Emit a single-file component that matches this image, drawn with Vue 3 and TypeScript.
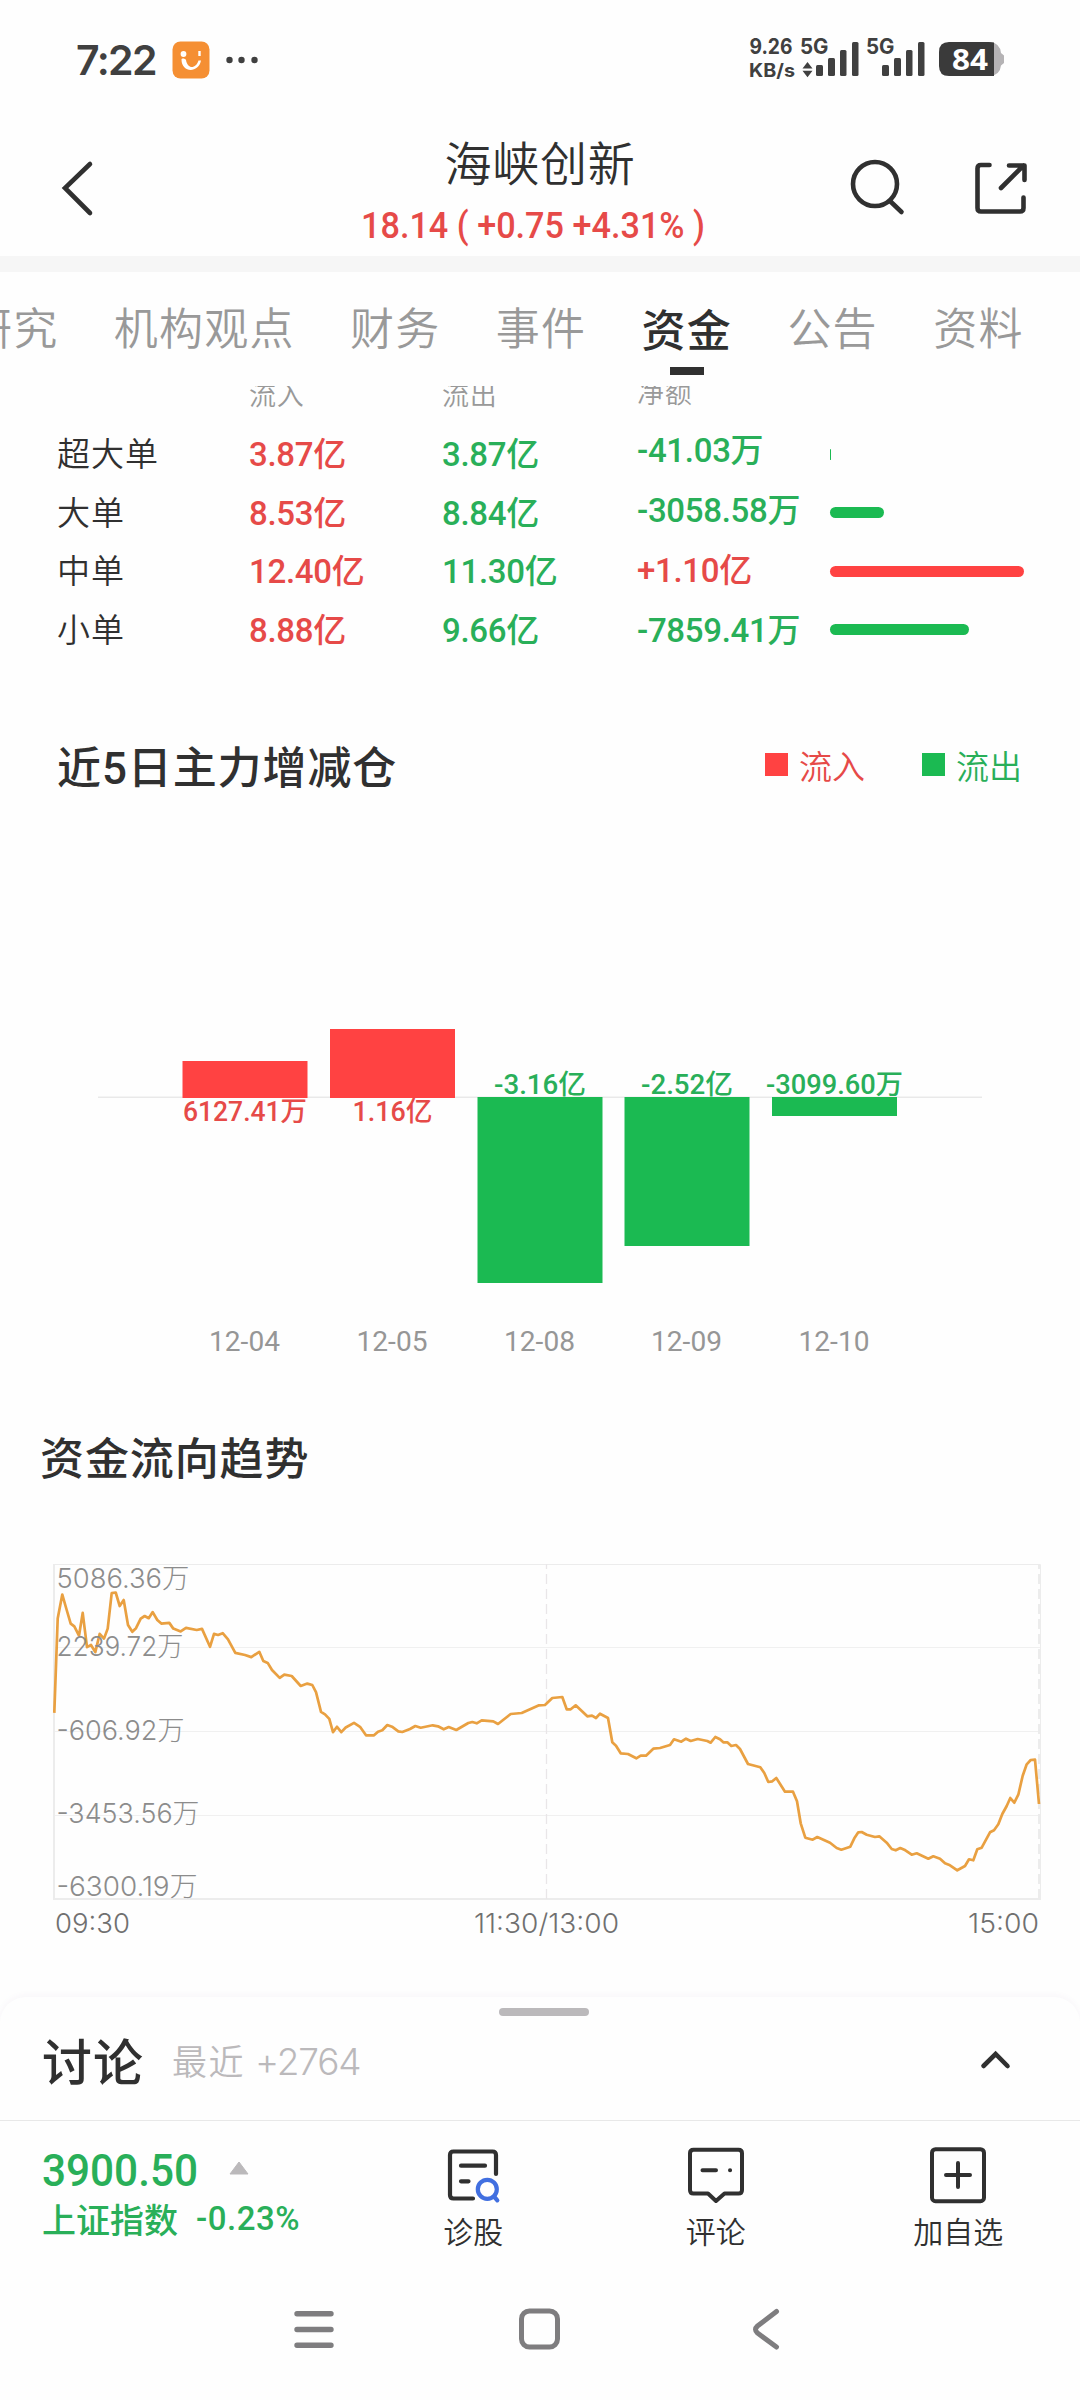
<script setup lang="ts">
type Tone = 'up' | 'down'

interface Tab {
  label: string
  active?: boolean
}

interface DayBar {
  date: string
  label: string
  tone: Tone
  center: number
  size: number
  labelWidth: number
}

interface AxisLabel {
  text: string
  baseline: number
  width: number
}

const tabs: Tab[] = [
  { label: '研究' },
  { label: '机构观点' },
  { label: '财务' },
  { label: '事件' },
  { label: '资金', active: true },
  { label: '公告' },
  { label: '资料' },
]

const sizes: string[] = ['超大单', '大单', '中单', '小单']
const inflow: string[] = ['3.87亿', '8.53亿', '12.40亿', '8.88亿']
const outflow: string[] = ['3.87亿', '8.84亿', '11.30亿', '9.66亿']
const net: { text: string; tone: Tone; bar: number }[] = [
  { text: '-41.03万', tone: 'down', bar: 1 },
  { text: '-3058.58万', tone: 'down', bar: 54 },
  { text: '+1.10亿', tone: 'up', bar: 194 },
  { text: '-7859.41万', tone: 'down', bar: 139 },
]

const zero = 97
const days: DayBar[] = [
  { date: '12-04', label: '6127.41万', tone: 'up', center: 245, size: 36, labelWidth: 124 },
  { date: '12-05', label: '1.16亿', tone: 'up', center: 392.5, size: 68, labelWidth: 80 },
  { date: '12-08', label: '-3.16亿', tone: 'down', center: 540, size: 186, labelWidth: 92 },
  { date: '12-09', label: '-2.52亿', tone: 'down', center: 687, size: 149, labelWidth: 92 },
  { date: '12-10', label: '-3099.60万', tone: 'down', center: 834.5, size: 19, labelWidth: 137 },
]

const axis: AxisLabel[] = [
  { text: '5086.36万', baseline: 1587.5, width: 133 },
  { text: '2239.72万', baseline: 1655.5, width: 127 },
  { text: '-606.92万', baseline: 1739.5, width: 128 },
  { text: '-3453.56万', baseline: 1823, width: 143 },
  { text: '-6300.19万', baseline: 1896, width: 141 },
]

const trend =
  '54.3,1712.9 57.7,1618.6 62.3,1594.6 66.7,1610 70.7,1623.6 74.3,1626.4 79,1635.7 82.7,1612.9 87,1647.1 91,1645 95.3,1652.1 99.7,1633.9 104,1638.6 107.7,1628.6 111.7,1593.2 115.7,1592.5 119.7,1606 123.7,1600 128,1625 132.3,1631.8 136,1628.2 140.7,1618.6 144.7,1616 148.7,1618.2 152.7,1612.1 157.3,1620 161.3,1623.6 169.3,1622.9 173.3,1628.6 180.7,1631.4 186,1627.9 196.7,1630 202,1628.9 210,1646.8 214,1633.9 218,1635 222.7,1633.2 228,1639.3 235.3,1652.9 245,1655 251.3,1657.1 259.3,1651.8 263.3,1661 267.7,1662.9 272,1670 279.7,1677.9 284.3,1674.6 291.7,1676 300.7,1686 307.3,1683.6 312.3,1685 316,1692.1 321,1711.8 325,1714.3 329.3,1718.9 333,1732.1 337,1726.8 341.3,1732.1 345.7,1727.5 354,1722.9 360,1726.8 ' +
  '366,1735.3 374,1735.3 378,1731.7 382.3,1730.3 387.3,1725 392,1726.7 398.3,1731.3 402.3,1732 410,1729 415.3,1726 420.7,1727.7 432.7,1725.3 438,1726.3 443.7,1729.3 448.7,1727 456.3,1730 468.3,1723 472.3,1722 476.7,1723.3 481.7,1720.3 493.3,1721.3 498,1724 510.7,1714 521.7,1713 539,1705.3 545,1705 552.3,1698 562.3,1697 566.7,1709.3 570.7,1709.3 575.7,1705.3 587.3,1716.3 592,1715.7 596,1718 600,1713.7 608,1718 612.3,1742.3 616,1745.7 620.7,1753.3 628,1754 636.3,1758.3 640.7,1755.7 646,1755.7 653.3,1748.7 660,1748 670,1745 674,1739.3 681.3,1741.7 686,1738.7 690.7,1741 697.7,1739 707.3,1741 710.7,1742.7 715.3,1737 720,1739.3 ' +
  '723.3,1742.3 727.3,1742.3 731.3,1746 736,1745 740,1749 748,1764 760.3,1767.3 764.3,1773 768.3,1782 772.3,1781.3 776.3,1778 785,1791.7 793,1791.7 797,1801.3 800.7,1823.3 805.3,1837.7 812.7,1839.7 817.3,1837 830,1842.7 836.7,1848 841.3,1849.7 850.3,1846.7 854.3,1838.3 858.3,1832.3 861.7,1832 866.7,1834.7 875,1837 879.3,1836.3 886.7,1842.7 891.7,1849 895.7,1850.3 900.3,1848 904.3,1849.7 911.7,1854.7 916.7,1853.3 928.3,1858.7 933.3,1856.3 940,1858.7 945,1863.3 950,1865.3 957.3,1870.3 965,1866 969,1859.3 973.3,1860.3 977.3,1849.3 981.7,1847.7 990,1832.3 994,1830.3 998.3,1824.3 1002.3,1814 1006.7,1806 1010.3,1798 1014.3,1802.7 1018.3,1794.7 1022.7,1775.7 1026.7,1764.3 1030.7,1760 1035,1759.7 1039,1804'
</script>

<template>
  <div class="screen">
    <div class="status">
      <span class="clock">7:22</span>
      <svg class="app-badge" width="38" height="38" viewBox="0 0 38 38">
        <rect x="0.5" y="0.5" width="37" height="37" rx="8" fill="#f58f33" />
        <circle cx="11.500" cy="13" r="2.900" fill="#fff" />
        <path d="M27.500 10v5" stroke="#fff" stroke-width="2.400" />
        <path d="M9.500 18.500c0 13.500 17 14 19.500 1h-2.500c-2.500 8.500-11 9-12.500-.5c-1-2-4.500-2-4.500-.5z" fill="#fff" />
      </svg>
      <svg class="more" width="36" height="8" viewBox="0 0 36 8" fill="#404040">
        <circle cx="4.500" cy="4" r="3.200" /><circle cx="16.500" cy="4" r="3.200" /><circle cx="29.500" cy="4" r="3.200" />
      </svg>
      <svg class="signals" width="260" height="90" viewBox="748 15 260 90" fill="#404040">
        <g class="tiny">
          <text x="749.500" y="53.500" font-size="21.500" textLength="43" lengthAdjust="spacingAndGlyphs">9.26</text>
          <text x="749" y="76.500" font-size="18.500" textLength="46" lengthAdjust="spacingAndGlyphs">KB/s</text>
          <text x="800" y="53.500" font-size="21.500" textLength="28.500" lengthAdjust="spacingAndGlyphs">5G</text>
          <text x="866" y="53.500" font-size="21.500" textLength="28.500" lengthAdjust="spacingAndGlyphs">5G</text>
        </g>
        <path d="M802.500 68.500l5-6.500l5 6.500zM802.500 70.700l5 6.500l5-6.500z" />
        <g v-for="dx in [0, 66]" :key="dx" :transform="`translate(${dx} 0)`">
          <rect x="816" y="65" width="7" height="11" rx="1.500" />
          <rect x="828" y="58" width="7" height="18" rx="1.500" />
          <rect x="840" y="50" width="6.500" height="26" rx="1.500" />
          <rect x="852" y="42" width="6.500" height="34" rx="1.500" />
        </g>
        <path d="M990 42q10 1 11 11l3 2.500v7.500l-3 2.500q-1 9.500-11 10.500z" fill="#b5b3b5" />
        <path d="M994 42.500v33.500h-45q-10 0-10-10v-14q0-10 10-10h40q3 0 5 .5z" fill="#3a3a3a" />
        <text x="952" y="69.500" font-size="29" font-weight="700" fill="#fff" class="charge" textLength="36" lengthAdjust="spacingAndGlyphs">84</text>
      </svg>
    </div>

    <header class="head">
      <svg class="back" width="34" height="60" viewBox="61 158 34 60" fill="none" stroke="#303030" stroke-width="4.600" stroke-linecap="round">
        <path d="M90 164L65 188l25 25" />
      </svg>
      <div class="stock">
        <h1>海峡创新</h1>
        <svg class="quote" width="350" height="40" viewBox="0 0 350 40">
          <text x="2" y="32" textLength="344" lengthAdjust="spacingAndGlyphs">18.14 ( +0.75 +4.31% )</text>
        </svg>
      </div>
      <div class="actions">
        <svg width="180" height="60" viewBox="848 158 180 60" fill="none" stroke="#303030" stroke-width="4.600" stroke-linecap="round" stroke-linejoin="round">
          <circle cx="875" cy="184" r="22" />
          <path d="M890 201l11.500 11" />
          <path d="M989.500 165H981q-3.500 0-3.500 3.500V208q0 3.500 3.500 3.500h39q3.500 0 3.500-3.500v-10.500" />
          <path d="M1001 188l22.500-22.500M1009 165.500h15.500V180" />
        </svg>
      </div>
    </header>
    <div class="band"></div>

    <nav class="tabs">
      <span v-for="tab in tabs" :key="tab.label" :class="['tab', { active: tab.active }]">{{ tab.label }}</span>
    </nav>

    <main class="content">
      <section class="orders">
        <div class="col names">
          <div class="th"></div>
          <div v-for="name in sizes" :key="name" class="td name">{{ name }}</div>
        </div>
        <div class="col in">
          <div class="th">流入</div>
          <div v-for="(v, i) in inflow" :key="i" class="td num up">{{ v }}</div>
        </div>
        <div class="col out">
          <div class="th">流出</div>
          <div v-for="(v, i) in outflow" :key="i" class="td num down">{{ v }}</div>
        </div>
        <div class="col net">
          <div class="th">净额</div>
          <div v-for="row in net" :key="row.text" :class="['td', 'num', row.tone]">{{ row.text }}</div>
        </div>
        <div class="col meters">
          <div class="th"></div>
          <div v-for="row in net" :key="row.text" class="td">
            <i :class="['meter', row.tone]" :style="{ width: row.bar + 'px' }"></i>
          </div>
        </div>
      </section>

      <div class="section-head">
        <h2>近5日主力增减仓</h2>
        <span class="legend up"><i></i>流入</span>
        <span class="legend down"><i></i>流出</span>
      </div>
      <svg class="days" width="1080" height="370" viewBox="0 0 1080 370">
        <path d="M98 97.300H982" stroke="#e9e9e9" stroke-width="1.500" />
        <g v-for="d in days" :key="d.date">
          <rect
            :x="d.center - 62.500"
            :y="d.tone === 'up' ? zero - d.size : zero"
            width="125"
            :height="d.size + (d.tone === 'up' ? 1 : 0)"
            :class="d.tone"
          />
          <text
            class="day-value"
            :class="d.tone"
            :x="d.center - d.labelWidth / 2"
            :y="d.tone === 'up' ? 120.500 : 94"
            :textLength="d.labelWidth"
            lengthAdjust="spacingAndGlyphs"
          >{{ d.label }}</text>
          <text class="date" :x="d.center - 36" y="351" textLength="71" lengthAdjust="spacingAndGlyphs">{{ d.date }}</text>
        </g>
      </svg>

      <h2 class="trend-title">资金流向趋势</h2>
      <svg class="trend" width="1080" height="400" viewBox="0 1550 1080 400">
        <g fill="none" stroke="#ececec">
          <path d="M54 1647.500H1040M54 1731.500H1040M54 1815.500H1040" stroke="#f0f0f0" />
          <path d="M53 1564.500H1040.500V1900" />
          <path d="M54 1564V1900" stroke-width="2" />
          <path d="M53 1899H1041" stroke-width="2" />
          <path d="M546.500 1899V1564" stroke-dasharray="10 5" stroke="#e9e6e8" stroke-width="1.300" />
          <path d="M1039 1899V1564" stroke-dasharray="10 5" stroke-width="2" />
        </g>
        <polyline :points="trend" fill="none" stroke="#e9a041" stroke-width="2.700" stroke-linejoin="round" />
        <text
          v-for="a in axis"
          :key="a.text"
          class="axis"
          x="56.500"
          :y="a.baseline"
          :textLength="a.width"
          lengthAdjust="spacingAndGlyphs"
        >{{ a.text }}</text>
        <g class="times">
          <text x="55" y="1933" textLength="75" lengthAdjust="spacingAndGlyphs">09:30</text>
          <text x="474" y="1933" textLength="145" lengthAdjust="spacingAndGlyphs">11:30/13:00</text>
          <text x="968" y="1933" textLength="71" lengthAdjust="spacingAndGlyphs">15:00</text>
        </g>
      </svg>
    </main>

    <section class="sheet">
      <div class="grip"></div>
      <div class="talk">
        <h3>讨论</h3>
        <span class="recent">最近 <b>+2764</b></span>
        <svg class="expand" width="32" height="20" viewBox="980 2050 32 20" fill="none" stroke="#303030" stroke-width="4.600" stroke-linecap="round">
          <path d="M983.500 2066L995.600 2054L1007.500 2066" />
        </svg>
      </div>
      <footer class="bar">
        <div class="index down">
          <div class="index-top">
            <svg width="156" height="40" viewBox="0 0 156 40">
              <text x="0" y="35.500" font-size="43.500" textLength="156" lengthAdjust="spacingAndGlyphs">3900.50</text>
            </svg>
            <svg class="tri" width="20" height="14" viewBox="0 0 20 14"><path d="M10 1L19 13H1z" fill="#bbb9bb" stroke="#bbb9bb" stroke-linejoin="round" /></svg>
          </div>
          <div class="index-bottom"><span>上证指数</span><b>-0.23%</b></div>
        </div>
        <div class="action">
          <svg width="60" height="60" viewBox="443 2145 60 60" fill="none" stroke="#303030" stroke-width="4.200" stroke-linecap="round" stroke-linejoin="round">
            <path d="M496 2174V2155q0-3.500-3.500-3.500H453.500q-3.500 0-3.500 3.500V2195q0 3.500 3.500 3.500H473" />
            <path d="M461 2165.700h24M461 2181.300h7.500" />
            <g stroke="#416fe0"><circle cx="487.300" cy="2189.300" r="9.500" /><path d="M494 2196.500l3.300 3.800" /></g>
          </svg>
          <span>诊股</span>
        </div>
        <div class="action">
          <svg width="60" height="60" viewBox="686 2145 60 60" fill="none" stroke="#303030" stroke-width="4" stroke-linecap="round" stroke-linejoin="round">
            <path d="M693.500 2149.800H738.500q3.500 0 3.500 3.500V2190q0 3.500-3.500 3.500H724.500L716 2201L708 2193.500H693.500q-3.500 0-3.500-3.500V2153.300q0-3.500 3.500-3.500z" />
            <path d="M702.500 2170.300h13.500M730 2170.300h.1" />
          </svg>
          <span>评论</span>
        </div>
        <div class="action">
          <svg width="60" height="60" viewBox="928 2145 60 60" fill="none" stroke="#303030" stroke-width="4" stroke-linecap="round">
            <rect x="932" y="2149.200" width="52" height="52" rx="3.500" />
            <path d="M946 2175h24M958 2163v24" />
          </svg>
          <span>加自选</span>
        </div>
      </footer>
      <svg class="system" width="1080" height="60" viewBox="0 2300 1080 60" fill="none" stroke="#7e7d7f" stroke-width="5.400" stroke-linecap="round" stroke-linejoin="round">
        <path d="M297 2313.700h34M297 2329.500h34M297 2345.300h34" />
        <rect x="521.500" y="2311" width="36" height="36" rx="8" stroke-width="5" />
        <path d="M776.500 2311.500L757.500 2326q-4 3.500 0 7L776.500 2347" stroke-width="5" />
      </svg>
    </section>
  </div>
</template>

<style>
body {
  background: #fefefe;
}
</style>

<style scoped>
.screen {
  width: 1080px;
  height: 2400px;
  overflow: hidden;
  display: flex;
  flex-direction: column;
  background: #fefefe;
  color: #303030;
  font-family: Roboto, 'Noto Sans CJK SC', sans-serif;
}
svg {
  overflow: visible;
  flex: none;
}
h1,
h2,
h3 {
  margin: 0;
  font-weight: 400;
}
.up {
  color: #e64a48;
}
.down {
  color: #29af59;
}
.status {
  display: flex;
  align-items: center;
  height: 120px;
  padding: 0 72px 0 76px;
}
.clock {
  width: 96px;
  font: 600 41px/50px Inter, sans-serif;
  letter-spacing: -1.6px;
  color: #404040;
}
.more {
  margin-left: 15px;
}
.signals {
  margin-left: auto;
}
.tiny {
  font-family: Inter, sans-serif;
  font-weight: 700;
}
.charge {
  font-family: 'Noto Sans', sans-serif;
}
.head {
  display: grid;
  grid-template-columns: 1fr 350px 1fr;
  height: 136px;
}
.back {
  margin: 38px 0 0 61px;
}
.stock {
  display: flex;
  flex-direction: column;
  align-items: center;
  padding-top: 14px;
}
.stock h1 {
  font-size: 47px;
  line-height: 61px;
  font-weight: 350;
  letter-spacing: 0.8px;
}
.quote {
  margin: 11px 12px 0 0;
  font-size: 36px;
  font-weight: 500;
  fill: #e64a48;
}
.actions {
  display: flex;
  justify-content: flex-end;
  padding: 38px 52px 0 0;
}
.band {
  height: 16px;
  flex: none;
  background: #f6f6f6;
}
.tabs {
  display: flex;
  gap: 55.4px;
  height: 114px;
  margin-left: -32px;
}
.tab {
  flex: none;
  display: flex;
  flex-direction: column;
  align-items: center;
  padding-top: 28px;
  font-size: 44px;
  line-height: 60px;
  letter-spacing: 1.2px;
  font-weight: 350;
  color: #999;
}
.tab.active {
  padding-top: 30px;
  color: #303030;
  font-weight: 500;
}
.tab.active::after {
  content: '';
  width: 34px;
  height: 8px;
  margin-top: 5px;
  background: #303030;
}
.content {
  height: 1604px;
  flex: none;
  overflow: hidden;
}
.orders {
  display: grid;
  grid-template-columns: 192px 193px 195px 193px 250px;
  padding-left: 57px;
  height: 348px;
}
.col {
  margin-top: -5px;
}
.th {
  height: 42px;
  font-size: 27px;
  line-height: 30px;
  letter-spacing: 0.8px;
  font-weight: 350;
  color: #999;
}
.td {
  display: flex;
  align-items: center;
  height: 58.5px;
}
.name {
  font-size: 33px;
  letter-spacing: 1px;
  font-weight: 350;
}
.num {
  font-size: 33px;
  font-weight: 500;
  letter-spacing: -0.3px;
  white-space: nowrap;
}
.net {
  margin-top: -7px;
}
.net .th {
  height: 39px;
}
.net .td {
  height: 60px;
}
.meters .th {
  height: 44.500px;
}
.meters .td {
  height: 58.300px;
}
.meter {
  height: 11px;
  border-radius: 5.500px;
}
.meter.up,
.legend.up i {
  background: #ff4242;
}
.meter.down,
.legend.down i {
  background: #1bba52;
}
.section-head {
  display: flex;
  align-items: center;
  height: 61px;
  padding: 0 58px 0 57px;
}
h2 {
  font-size: 44px;
  letter-spacing: 0.9px;
  font-weight: 500;
}
.section-head h2 {
  margin-right: auto;
}
.legend {
  display: flex;
  align-items: center;
  gap: 11px;
  margin-left: 57px;
  font-size: 33px;
  font-weight: 350;
}
.legend i {
  width: 23px;
  height: 23px;
}
.days {
  display: block;
  margin-top: 205px;
}
.days rect.up {
  fill: #ff4242;
}
.days rect.down {
  fill: #1bba52;
}
.day-value {
  font-size: 27px;
  font-weight: 500;
  fill: currentColor;
}
.date {
  font-size: 27px;
  fill: #969696;
}
.trend-title {
  margin: 60px 0 60px 40px;
  line-height: 60px;
}
.trend {
  display: block;
}
.axis,
.times {
  font-family: Inter, 'Noto Sans CJK SC', sans-serif;
  font-size: 27px;
  font-weight: 300;
  fill: #8c8c8c;
}
.times {
  fill: #707070;
}
.sheet {
  flex: none;
  height: 403px;
  margin-top: 7px;
  border-radius: 26px 26px 0 0;
  background: #fefefe;
  box-shadow: 0 -2px 6px rgba(90, 50, 120, 0.04);
}
.grip {
  width: 90px;
  height: 8px;
  margin: 0 auto;
  border-radius: 4px;
  background: #bbb9bb;
  position: relative;
  top: 11px;
  left: 4px;
}
.talk {
  display: flex;
  align-items: center;
  height: 116px;
  padding: 0 68px 7px 42px;
  box-sizing: border-box;
  border-bottom: 1px solid #e8e8e8;
}
.talk h3 {
  font-size: 50px;
  letter-spacing: 1px;
  font-weight: 500;
}
.recent {
  margin-left: 28px;
  font-size: 35px;
  font-weight: 350;
  letter-spacing: 1.5px;
  color: #bbb9bb;
}
.recent b {
  font-family: Inter, sans-serif;
  font-weight: 300;
  font-size: 37px;
  letter-spacing: -1.2px;
}
.expand {
  margin: 2px 0 0 auto;
}
.bar {
  display: flex;
  height: 179px;
}
.index {
  box-sizing: border-box;
  width: 352px;
  padding: 29px 0 0 42px;
}
.index-top {
  display: flex;
  gap: 31px;
  align-items: center;
  height: 40px;
}
.index-top text {
  fill: currentColor;
  font-weight: 500;
}
.tri {
  margin-top: -4px;
}
.index-bottom {
  display: flex;
  align-items: center;
  margin-top: 6px;
  height: 44px;
  font-size: 34px;
  font-weight: 500;
}
.index-bottom b {
  margin-left: 18px;
  font-size: 33px;
  letter-spacing: 0.5px;
  font-weight: 500;
}
.action {
  width: 242.500px;
  padding-top: 24px;
  display: flex;
  flex-direction: column;
  align-items: center;
}
.action span {
  margin-top: 6px;
  font-size: 30px;
  line-height: 44px;
  font-weight: 350;
}
.system {
  display: block;
}
</style>
